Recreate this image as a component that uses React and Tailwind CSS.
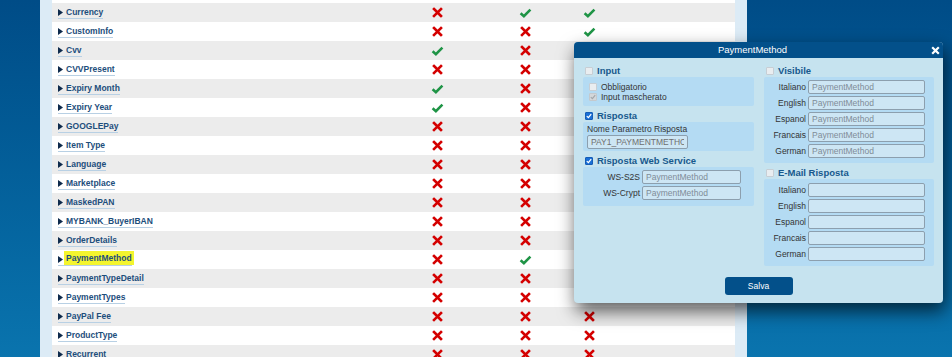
import React from 'react';

const rows = [
  ['', 'ok', 'no', 'no'],
  ['Currency', 'no', 'ok', 'ok'],
  ['CustomInfo', 'no', 'no', 'ok'],
  ['Cvv', 'ok', 'no', 'no'],
  ['CVVPresent', 'no', 'no', 'no'],
  ['Expiry Month', 'ok', 'no', 'no'],
  ['Expiry Year', 'ok', 'no', 'no'],
  ['GOOGLEPay', 'no', 'no', 'no'],
  ['Item Type', 'no', 'no', 'no'],
  ['Language', 'no', 'no', 'no'],
  ['Marketplace', 'no', 'no', 'no'],
  ['MaskedPAN', 'no', 'no', 'no'],
  ['MYBANK_BuyerIBAN', 'no', 'no', 'no'],
  ['OrderDetails', 'no', 'no', 'no'],
  ['PaymentMethod', 'no', 'ok', 'no'],
  ['PaymentTypeDetail', 'no', 'no', 'no'],
  ['PaymentTypes', 'no', 'no', 'no'],
  ['PayPal Fee', 'no', 'no', 'no'],
  ['ProductType', 'no', 'no', 'no'],
  ['Recurrent', 'no', 'no', 'no'],
];

const langs = ['Italiano', 'English', 'Espanol', 'Francais', 'German'];

function Cross() {
  return (
    <svg width="11" height="11" viewBox="0 0 11 11">
      <path d="M2 2L9 9M9 2L2 9" stroke="#d40000" strokeWidth="2.6" strokeLinecap="square" fill="none" />
    </svg>
  );
}

function Tick() {
  return (
    <svg width="13" height="10" viewBox="0 0 13 10">
      <path d="M1.6 5.2L4.9 8.2L11.4 1.6" stroke="#1f9446" strokeWidth="2.6" fill="none" />
    </svg>
  );
}

function Mark({ v }) {
  return v === 'ok' ? <Tick /> : <Cross />;
}

function Row({ name, a, b, c, odd }) {
  const hl = name === 'PaymentMethod';
  return (
    <div className={`flex h-[19px] items-center ${odd ? 'bg-[#ececec]' : 'bg-white'}`}>
      <div className="w-[341px] pl-[6px] flex items-center">
        {name && (
          <span className="inline-flex items-center gap-[3px] border-b border-[#b8d0e4] text-[8.5px] leading-[11px] font-bold text-[#1d4e7c]">
            <svg width="5" height="7" viewBox="0 0 5 7">
              <path d="M0 0L5 3.5L0 7Z" fill="#0e2a4c" />
            </svg>
            <span className={hl ? 'bg-[#f4f52e] -mt-[3px] pt-[2px] pb-[1px] px-[2px] -mx-[2px]' : ''}>{name}</span>
          </span>
        )}
      </div>
      <div className="w-[88px] flex justify-center"><Mark v={a} /></div>
      <div className="w-[88px] flex justify-center"><Mark v={b} /></div>
      <div className="w-[40px] flex justify-center"><Mark v={c} /></div>
    </div>
  );
}

function Box({ state }) {
  if (state === 'on') {
    return (
      <span className="w-[8px] h-[8px] rounded-[1px] bg-[#1a6fd6] border border-[#155db6] flex items-center justify-center">
        <svg width="6" height="6" viewBox="0 0 6 6">
          <path d="M0.8 3.1L2.4 4.6L5.2 1.2" stroke="white" strokeWidth="1.3" fill="none" />
        </svg>
      </span>
    );
  }
  if (state === 'dis') {
    return (
      <span className="w-[8px] h-[8px] rounded-[1px] bg-[#d3d7da] border border-[#c4c9cd] flex items-center justify-center">
        <svg width="6" height="6" viewBox="0 0 6 6">
          <path d="M0.8 3.1L2.4 4.6L5.2 1.2" stroke="#a3a7aa" strokeWidth="1.2" fill="none" />
        </svg>
      </span>
    );
  }
  return <span className="w-[8px] h-[8px] rounded-[1px] bg-[#e9edf0] border border-[#c7ced4]" />;
}

function Head({ state, children }) {
  return (
    <div className="h-[12px] flex items-center gap-[4px] pl-[2px]">
      <Box state={state} />
      <span className="text-[9.5px] font-bold text-[#17598d] leading-[12px]">{children}</span>
    </div>
  );
}

function Field({ placeholder, value, className }) {
  return (
    <input
      readOnly
      placeholder={placeholder}
      value={value || ''}
      className={`h-[14px] rounded-[2px] border border-[#8c9fae] bg-[#cde6f4] px-[3px] text-[8.5px] text-[#6a6a6a] placeholder:text-[#7f8c97] outline-none ${className}`}
    />
  );
}

export default function App() {
  return (
    <div className="relative w-[952px] h-[357px] overflow-hidden bg-gradient-to-b from-[#004c87] to-[#0a74ae] font-['Liberation_Sans',Arial,sans-serif]">
      <div className="ml-[40px] w-[707px] bg-[#dcebf6] px-[12px] -mt-[16px]">
        {rows.map((r, i) => (
          <Row key={i} name={r[0]} a={r[1]} b={r[2]} c={r[3]} odd={i % 2 === 1} />
        ))}
      </div>

      <div className="absolute left-[574px] top-[42px] w-[369px] h-[261px] rounded-[4px] bg-[#c6e3ef] shadow-[2px_8px_18px_rgba(0,0,0,0.65)] flex flex-col">
        <div className="h-[16px] bg-[#03508a] rounded-t-[4px] flex items-center">
          <span className="flex-1 text-center text-white text-[9.5px] leading-[16px]">PaymentMethod</span>
          <svg width="9" height="9" viewBox="0 0 9 9" className="mr-[3px]">
            <path d="M1.2 1.2L7.8 7.8M7.8 1.2L1.2 7.8" stroke="white" strokeWidth="2.2" fill="none" />
          </svg>
        </div>

        <div className="flex gap-[10px] px-[9px] pt-[7px]">
          <div className="w-[171px] flex flex-col">
            <Head state="off">Input</Head>
            <div className="h-[29px] bg-[#b4dbf3] rounded-[2px] pl-[6px] pt-[5px] flex flex-col text-[8.5px] text-[#333]">
              <div className="h-[10px] flex items-center gap-[4px]"><Box state="off" /><span>Obbligatorio</span></div>
              <div className="h-[10px] flex items-center gap-[4px]"><Box state="dis" /><span>Input mascherato</span></div>
            </div>
            <div className="mt-[4px]"><Head state="on">Risposta</Head></div>
            <div className="h-[29px] bg-[#b4dbf3] rounded-[2px] pl-[4px] pt-[2px] flex flex-col text-[8.5px] text-[#333]">
              <span className="leading-[10px]">Nome Parametro Risposta</span>
              <Field value="PAY1_PAYMENTMETHOD" className="w-[101px] mt-[1px] text-[#6f6f6f]" />
            </div>
            <div className="mt-[4px]"><Head state="on">Risposta Web Service</Head></div>
            <div className="h-[39px] bg-[#b4dbf3] rounded-[2px] pt-[3px] flex flex-col gap-[2px] text-[8.5px] text-[#333]">
              {['WS-S2S', 'WS-Crypt'].map((l) => (
                <div key={l} className="flex items-center gap-[2px]">
                  <span className="w-[57px] text-right">{l}</span>
                  <Field placeholder="PaymentMethod" className="w-[99px]" />
                </div>
              ))}
            </div>
          </div>

          <div className="w-[170px] flex flex-col">
            <Head state="off">Visibile</Head>
            <div className="h-[86px] bg-[#b4dbf3] rounded-[2px] pt-[3px] flex flex-col gap-[2px] text-[8.5px] text-[#333]">
              {langs.map((l) => (
                <div key={l} className="flex items-center gap-[2px]">
                  <span className="w-[42px] text-right">{l}</span>
                  <Field placeholder="PaymentMethod" className="w-[117px]" />
                </div>
              ))}
            </div>
            <div className="mt-[4px]"><Head state="off">E-Mail Risposta</Head></div>
            <div className="h-[87px] bg-[#b4dbf3] rounded-[2px] pt-[4px] flex flex-col gap-[2px] text-[8.5px] text-[#333]">
              {langs.map((l) => (
                <div key={l} className="flex items-center gap-[2px]">
                  <span className="w-[42px] text-right">{l}</span>
                  <Field className="w-[117px]" />
                </div>
              ))}
            </div>
          </div>
        </div>

        <div className="flex justify-center mt-[11px]">
          <button className="w-[68px] h-[18px] rounded-[3px] bg-[#03508a] text-white text-[8.5px]">Salva</button>
        </div>
      </div>
    </div>
  );
}
